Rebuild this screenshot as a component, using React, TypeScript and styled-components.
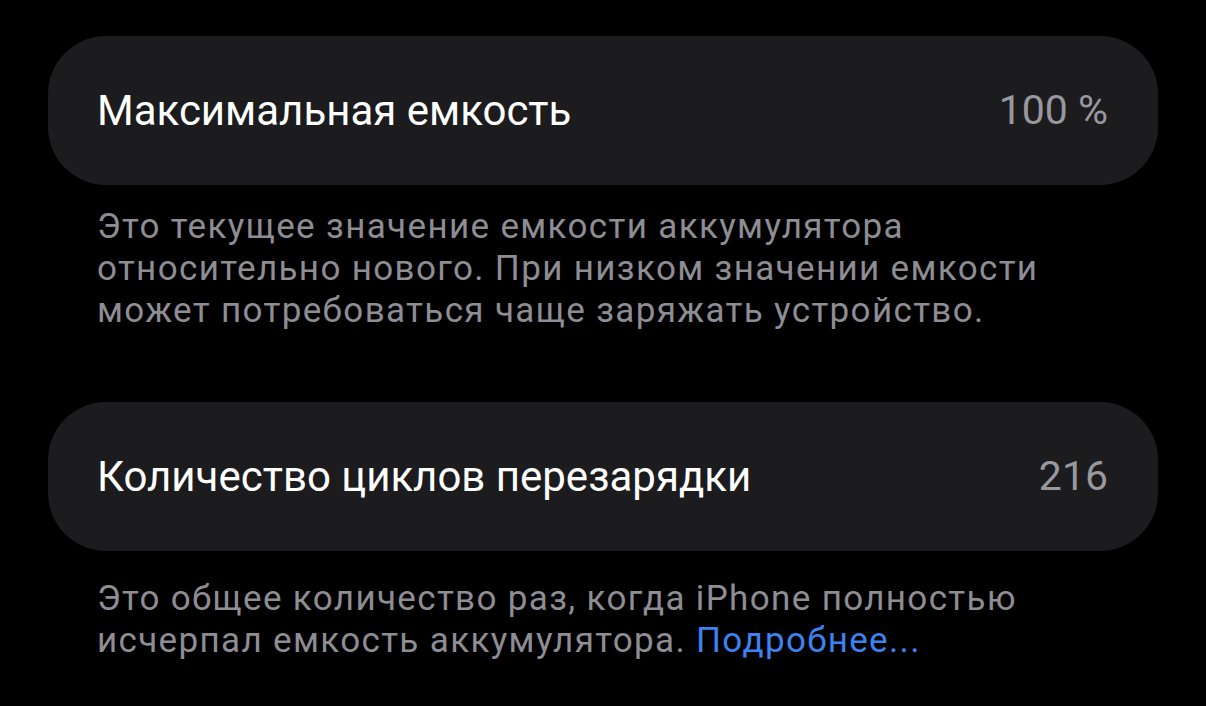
import React from 'react'
import styled, { createGlobalStyle } from 'styled-components'

const GlobalStyle = createGlobalStyle`
  html, body {
    margin: 0;
    padding: 0;
    background: #000;
  }
  body {
    font-family: Roboto, "Noto Sans", "Liberation Sans", sans-serif;
    -webkit-font-smoothing: antialiased;
  }
`

const Page = styled.div`
  width: 1206px;
  height: 706px;
  box-sizing: border-box;
  padding: 36px 48px 0 48px;
  background: #000;
  overflow: hidden;
`

const Section = styled.section`
  margin-bottom: 70px;
`

const Card = styled.div`
  height: 149px;
  box-sizing: border-box;
  padding: 0 50px 0 49px;
  border-radius: 58px;
  background: #1c1c1e;
  display: flex;
  align-items: center;
  justify-content: space-between;
`

const Label = styled.span`
  color: #fff;
  font-size: 42px;
  line-height: 1;
`

const Value = styled.span`
  color: #98989e;
  font-size: 41px;
  line-height: 1;
`

const Note = styled.p<{ $top: number }>`
  margin: ${p => p.$top}px 0 0 0;
  padding: 0 49px;
  color: #8d8d93;
  font-size: 35px;
  letter-spacing: 1.35px;
  line-height: 42px;
`

const Link = styled.a`
  color: #3c82f0;
  text-decoration: none;
`

const App = () => {
  return (
    <>
      <GlobalStyle />
      <Page>
        <Section>
          <Card>
            <Label>Максимальная емкость</Label>
            <Value>100 %</Value>
          </Card>
          <Note $top={21}>
            Это текущее значение емкости аккумулятора<br />
            относительно нового. При низком значении емкости<br />
            может потребоваться чаще заряжать устройство.
          </Note>
        </Section>
        <Section>
          <Card>
            <Label>Количество циклов перезарядки</Label>
            <Value>216</Value>
          </Card>
          <Note $top={27}>
            Это общее количество раз, когда iPhone полностью<br />
            исчерпал емкость аккумулятора. <Link href="#">Подробнее...</Link>
          </Note>
        </Section>
      </Page>
    </>
  )
}

export default App
